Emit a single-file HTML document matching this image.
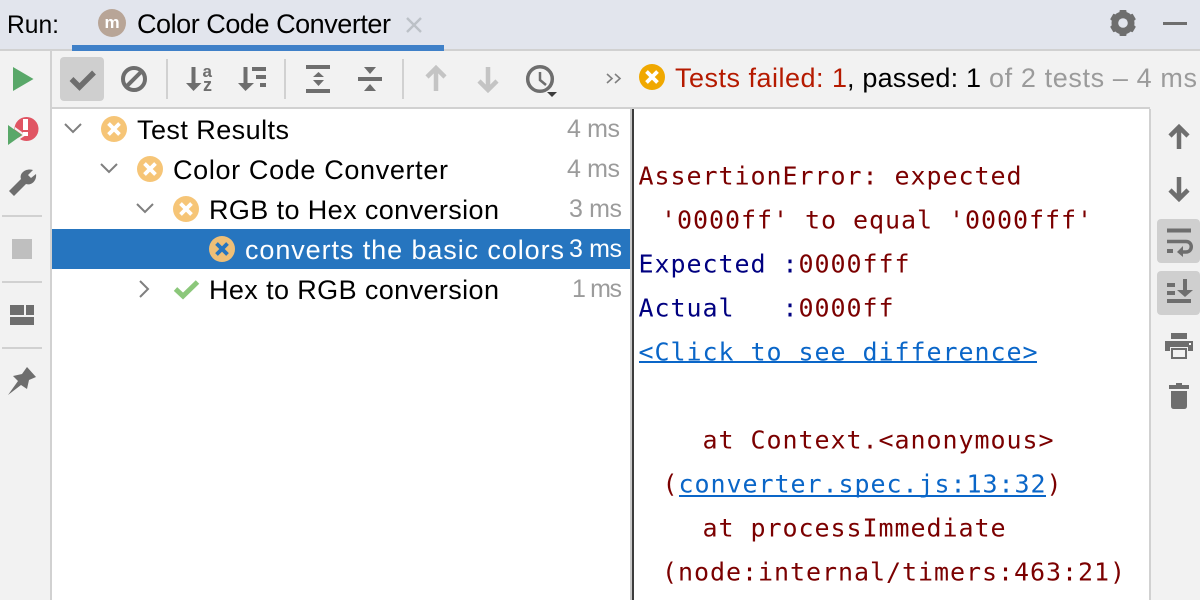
<!DOCTYPE html>
<html><head><meta charset="utf-8"><style>
html,body{margin:0;padding:0;width:1200px;height:600px;overflow:hidden;background:#fff}
svg{display:block}
.s{font-family:"Liberation Sans",sans-serif;font-size:27px;fill:#000}
.m{font-family:"DejaVu Sans Mono","Liberation Mono",monospace;font-size:25px;letter-spacing:.95px}
.r{fill:#7b0000}.n{fill:#000080}.b{fill:#0a66c8}
.g{fill:#9b9b9b}
.i{fill:#6e6e6e}.l{stroke:#6e6e6e;fill:none}
</style></head><body>
<svg width="1200" height="600" viewBox="0 0 1200 600" xmlns="http://www.w3.org/2000/svg">
<defs>
<g id="err"><circle r="13" fill="#f6c577"/><path d="M-5.500-5.500 5.500 5.500M5.500-5.500-5.500 5.500" stroke="#fff" stroke-width="3.800"/></g>
</defs>
<!-- backgrounds -->
<rect width="1200" height="50" fill="#e2e5ed"/>
<rect y="49" width="1200" height="2" fill="#d1d1d1"/>
<rect y="51" width="1200" height="549" fill="#f2f2f2"/>
<rect x="50" y="51" width="2" height="549" fill="#d1d1d1"/>
<rect x="72" y="45" width="372" height="6" fill="#3f80c8"/>
<rect x="52" y="107" width="1098" height="2" fill="#d1d1d1"/>
<rect x="52" y="109" width="578" height="491" fill="#fff"/>
<rect x="630" y="109" width="3" height="491" fill="#c9c9c9"/>
<rect x="632" y="109" width="2" height="491" fill="#3c3c3c"/>
<rect x="634" y="109" width="515" height="491" fill="#fff"/>
<rect x="1149" y="109" width="2" height="491" fill="#d1d1d1"/>
<!-- top tab -->
<text class="s" x="7" y="33" textLength="52" lengthAdjust="spacingAndGlyphs" style="font-size:25px">Run:</text>
<circle cx="112" cy="23" r="14" fill="#b8a597"/>
<text x="112" y="28" text-anchor="middle" font-family="Liberation Sans" font-weight="bold" font-size="17" fill="#fff">m</text>
<text class="s" x="137" y="33" textLength="254" lengthAdjust="spacing">Color Code Converter</text>
<path d="M407 18 421 32M421 18 407 32" stroke="#bcc1c7" stroke-width="2.400"/>
<!-- gear & minimize -->
<g transform="translate(1123 23)">
<circle r="8.500" fill="none" stroke="#6e6e6e" stroke-width="6"/>
<g fill="#6e6e6e"><rect x="-3.500" y="-13" width="7" height="26" rx="1"/><rect x="-3.500" y="-13" width="7" height="26" rx="1" transform="rotate(60)"/><rect x="-3.500" y="-13" width="7" height="26" rx="1" transform="rotate(120)"/></g>
<circle r="4.800" fill="#e2e5ed"/>
</g>
<rect x="1163" y="22" width="24" height="3" fill="#6e6e6e"/>
<!-- toolbar -->
<rect x="60" y="57" width="44" height="44" rx="4" fill="#cfcfcf"/>
<path d="M71.500 79 79.500 87 94 72.500" class="l" stroke-width="5.500"/>
<circle cx="134" cy="79" r="11" class="l" stroke-width="4"/>
<path d="M126.500 86.500 141.500 71.500" class="l" stroke-width="4"/>
<rect x="166" y="59" width="2" height="40" fill="#d1d1d1"/>
<path d="M193.500 67V85" class="l" stroke-width="4"/>
<path d="M186 83H201.500L193.500 91Z" class="i"/>
<text x="202.500" y="77" font-family="Liberation Sans" font-weight="bold" font-size="17" fill="#6e6e6e">a</text>
<text x="203" y="91" font-family="Liberation Sans" font-weight="bold" font-size="18" fill="#6e6e6e">z</text>
<path d="M245.500 67V85" class="l" stroke-width="4"/>
<path d="M238 83H254L245.500 91Z" class="i"/>
<path d="M252 67H266V71H252ZM256 75H266V79H256ZM260 83H266V87H260Z" class="i"/>
<rect x="284" y="59" width="2" height="40" fill="#d1d1d1"/>
<path d="M306 65H330V69H306ZM306 89H330V93H306ZM318.500 72 324 77H313ZM313 80H324L318.500 86Z" class="i"/>
<path d="M358 77H382V81H358ZM364 67H376L370 74ZM370 84 376 91H364Z" class="i"/>
<rect x="402" y="59" width="2" height="40" fill="#d1d1d1"/>
<path d="M436 69V91M427 77 436 68 445 77" stroke="#c4c4c4" stroke-width="4.500" fill="none"/>
<path d="M488 67V89M479 81 488 90 497 81" stroke="#c4c4c4" stroke-width="4.500" fill="none"/>
<circle cx="540" cy="79" r="12.300" class="l" stroke-width="3.500"/>
<path d="M540 72V80L546 85" class="l" stroke-width="2.500"/>
<path d="M547 92H557L552 97Z" fill="#3c3c3c"/>
<path d="M607 74 612 78.500 607 83M615 74 620 78.500 615 83" stroke="#7f7f7f" stroke-width="1.600" fill="none"/>
<circle cx="652" cy="77" r="13" fill="#f0a800"/>
<path d="M646.500 71.500 657.500 82.500M657.500 71.500 646.500 82.500" stroke="#fff" stroke-width="3.800"/>
<text class="s" x="675" y="87" textLength="172" lengthAdjust="spacing" style="fill:#b51a00">Tests failed: 1</text>
<text class="s" x="847" y="87" textLength="134" lengthAdjust="spacing">, passed: 1</text>
<text class="s g" x="989" y="87" textLength="208" lengthAdjust="spacing">of 2 tests – 4 ms</text>
<!-- left bar -->
<path d="M13 67 33.500 79 13 91Z" fill="#59a869"/>
<circle cx="26.500" cy="129" r="12" fill="#e05563"/>
<path d="M22.500 135 15 129.600 15 127 24 133.500 24.500 136 15.500 142 15.500 139.800Z" fill="#f2f2f2"/>
<path d="M8 125 22 135 8 145Z" fill="#59a869"/>
<rect x="23" y="119" width="5" height="11" fill="#fff"/><rect x="23" y="132" width="5" height="4" fill="#fff"/>
<path d="M33 170 28 175 31 178 36 174C37 180 32 186 26 184L14 196 9 191 21 179C19 173 26 168 33 170Z" class="i"/>
<rect x="2" y="215" width="40" height="2" fill="#d1d1d1"/>
<rect x="12" y="239" width="20" height="20" fill="#bfbfbf"/>
<rect x="2" y="281" width="40" height="2" fill="#d1d1d1"/>
<path d="M10 305H24V315H10ZM26 305H34V315H26ZM10 317H34V325H10Z" class="i"/>
<rect x="2" y="347" width="40" height="2" fill="#d1d1d1"/>
<path d="M27 367 36 377 29 380 27 389 21 385 8 395 18 381 13 376 22 374Z" class="i"/>
<!-- tree -->
<rect x="52" y="229" width="578" height="40" fill="#2675bf"/>
<path d="M65 124 73 132 81 124M101 164 109 172 117 164M137 204 145 212 153 204" stroke="#7f7f7f" stroke-width="2" fill="none"/>
<path d="M140 281 148 289 140 297" stroke="#7f7f7f" stroke-width="2" fill="none"/>
<use href="#err" x="114" y="129"/>
<use href="#err" x="150" y="169"/>
<use href="#err" x="186" y="209"/>
<circle cx="222" cy="249" r="13" fill="#eebf77"/>
<path d="M216.500 243.500 227.500 254.500M227.500 243.500 216.500 254.500" stroke="#2675bf" stroke-width="3.800"/>
<path d="M175.500 289 183 296 197.500 282" stroke="#8bc77a" stroke-width="5" fill="none"/>
<text class="s" x="137" y="139" textLength="152" lengthAdjust="spacing">Test Results</text>
<text class="s" x="173" y="179" textLength="275" lengthAdjust="spacing">Color Code Converter</text>
<text class="s" x="209" y="219" textLength="290" lengthAdjust="spacing">RGB to Hex conversion</text>
<text class="s" x="245" y="259" textLength="319" lengthAdjust="spacing" style="fill:#fff">converts the basic colors</text>
<text class="s" x="209" y="299" textLength="290" lengthAdjust="spacing">Hex to RGB conversion</text>
<text class="s g" x="567" y="137" textLength="53" lengthAdjust="spacing" style="font-size:25px">4 ms</text>
<text class="s g" x="567" y="177" textLength="53" lengthAdjust="spacing" style="font-size:25px">4 ms</text>
<text class="s g" x="569" y="217" textLength="53" lengthAdjust="spacing" style="font-size:25px">3 ms</text>
<text class="s" x="569" y="257" textLength="53" lengthAdjust="spacing" style="font-size:25px;fill:#fff">3 ms</text>
<text class="s g" x="572" y="297" textLength="50" lengthAdjust="spacing" style="font-size:25px">1 ms</text>
<!-- console -->
<text class="m r" x="638.500" y="184.500">AssertionError: expected</text>
<text class="m r" x="661" y="228.500">'0000ff' to equal '0000fff'</text>
<text class="m" x="638.500" y="272.500" xml:space="preserve"><tspan class="n">Expected :</tspan><tspan class="r">0000fff</tspan></text>
<text class="m" x="638.500" y="316.500" xml:space="preserve"><tspan class="n">Actual   :</tspan><tspan class="r">0000ff</tspan></text>
<text class="m b" x="638.500" y="360.500">&lt;Click to see difference&gt;</text>
<rect x="639" y="361" width="398" height="2" fill="#0a66c8"/>
<text class="m r" x="702.500" y="448.500">at Context.&lt;anonymous&gt;</text>
<text class="m r" x="662.500" y="492.500">(</text>
<text class="m b" x="678.500" y="492.500">converter.spec.js:13:32</text>
<rect x="679" y="495" width="367" height="2" fill="#0a66c8"/>
<text class="m r" x="1046.500" y="492.500">)</text>
<text class="m r" x="702.500" y="536.500">at processImmediate</text>
<text class="m r" x="662" y="580.500">(node:internal/timers:463:21)</text>
<!-- right bar -->
<path d="M1179 127V149M1170 136 1179 127 1188 136" class="l" stroke-width="4.500"/>
<path d="M1179 177V199M1170 190 1179 199 1188 190" class="l" stroke-width="4.500"/>
<rect x="1157" y="219" width="43" height="44" rx="4" fill="#cfcfcf"/>
<rect x="1157" y="271" width="43" height="44" rx="4" fill="#cfcfcf"/>
<path d="M1167 228.500H1191V232.500H1167ZM1167 249H1173V253H1167Z" class="i"/>
<path d="M1167 241.500H1186C1193 241.500 1193 252 1186 252H1181" class="l" stroke-width="3.500"/>
<path d="M1183 246 1177 252 1183 257Z" class="i"/>
<path d="M1167 283H1175V287H1167ZM1167 291H1175V295H1167ZM1167 299H1191V303H1167Z" class="i"/>
<path d="M1185 279V291" class="l" stroke-width="4"/>
<path d="M1177 290H1193L1185 297Z" class="i"/>
<path d="M1171 333H1187V339H1171ZM1165 341H1193V351H1188V347H1170V351H1165Z" class="i"/>
<rect x="1189" y="343" width="2" height="2" fill="#fff"/>
<path d="M1172 349H1186V358H1172Z" class="l" stroke-width="2"/>
<path d="M1169 385H1189V389H1169ZM1176 383H1182V385H1176ZM1171 391H1187V406Q1187 409 1184 409H1174Q1171 409 1171 406Z" class="i"/>
</svg>
</body></html>
